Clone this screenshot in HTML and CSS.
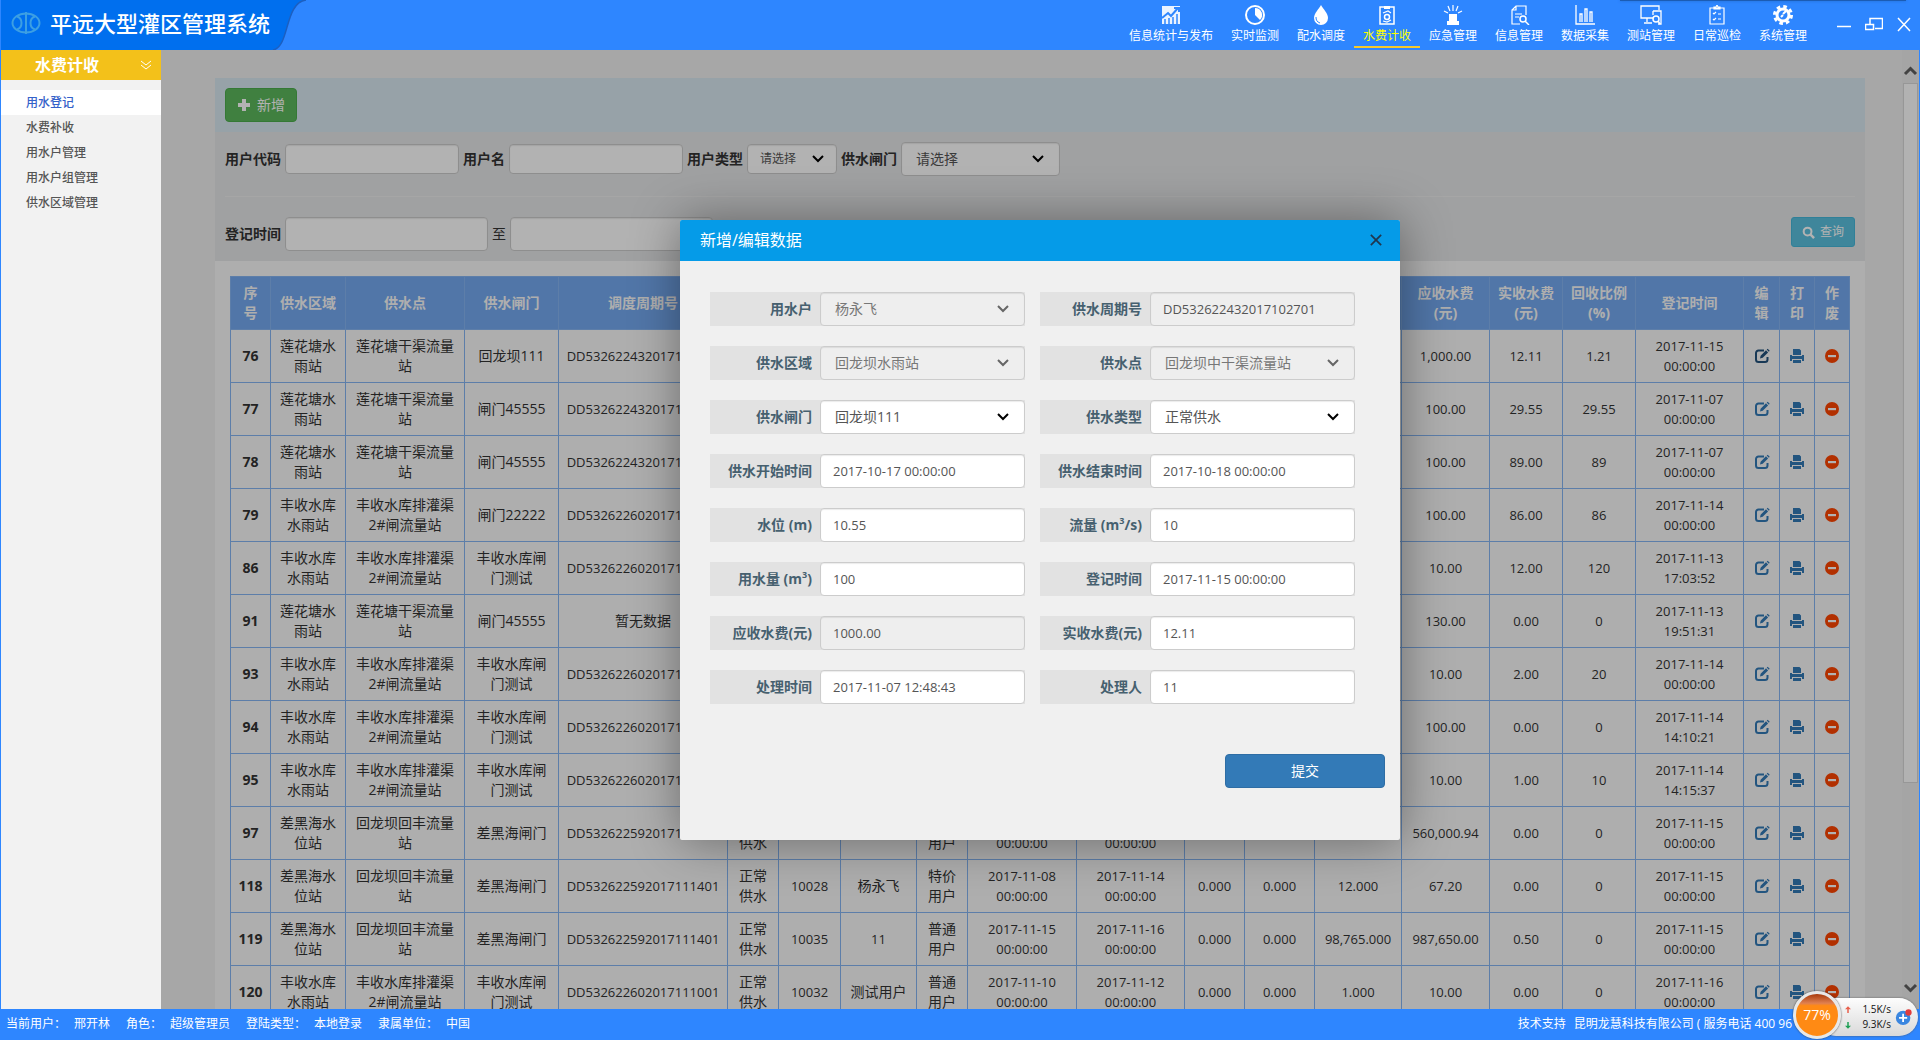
FILE: index.html
```html
<!DOCTYPE html>
<html lang="zh-CN">
<head>
<meta charset="utf-8">
<title>平远大型灌区管理系统</title>
<link rel="stylesheet" href="styles.css">
</head>
<body>
<svg class="sprite" aria-hidden="true">
  <symbol id="i-edit" viewBox="0 0 16 16"><path d="M10 2.500H4.500A2.500 2.500 0 0 0 2 5v6.500A2.500 2.500 0 0 0 4.500 14H11a2.500 2.500 0 0 0 2.500-2.500V9" fill="none" stroke="currentColor" stroke-width="2"/><path d="M6 10.500l.6-2.800L12 2.300l2.100 2.100-5.400 5.400zM12.700 1.600l1-.9 2 2-.9 1z" fill="currentColor"/></symbol>
  <symbol id="i-print" viewBox="0 0 16 16"><path d="M4 1h6.500L12 2.500V7H4zM1 7h2v1h10V7h2v6h-2v-2H3v2H1zM4 12h8v3H4z" fill="currentColor"/></symbol>
  <symbol id="i-remove" viewBox="0 0 16 16"><circle cx="8" cy="8" r="7" fill="currentColor"/><path d="M4 7h8v2.200H4z" fill="#fff"/></symbol>
</svg>

<header class="topbar">
  <div class="brand">
    <svg class="brand-bg" viewBox="0 0 305 50" preserveAspectRatio="none" aria-hidden="true"><path d="M0 0h305c-22 3-16 47-33 50H0z" fill="#006fee"/><path d="M305 0c-22 3-16 47-33 50" fill="none" stroke="#1c5fc0" stroke-width="1.500"/></svg>
    <svg class="brand-logo" viewBox="0 0 30 22" aria-hidden="true"><g fill="none" stroke="#3c9fe3" stroke-width="2"><ellipse cx="15" cy="11" rx="13.500" ry="9.500"/><path d="M15 0v22M6 4.500c6 2 6 11 0 13M24 4.500c-6 2-6 11 0 13"/></g></svg>
    <h1>平远大型灌区管理系统</h1>
  </div>
  <nav class="mainnav">
    <a class="wide" href="#"><svg viewBox="0 0 20 20"><path d="M1 1h18v18H1z" opacity=".9"/><path d="M1 13l6-5 3 3 7-8m-4 0h5v4" fill="none" stroke="#2e86ff" stroke-width="2"/><path d="M4 14v6M8 13v7M12 12v8M16 9v11" stroke="#2e86ff" stroke-width="1.500"/></svg>信息统计与发布</a>
    <a href="#"><svg viewBox="0 0 20 20"><circle cx="10" cy="10" r="9" fill="none" stroke="#fff" stroke-width="2"/><path d="M10 3a7 7 0 0 1 5 12l-5-5z"/></svg>实时监测</a>
    <a href="#"><svg viewBox="0 0 20 20"><path d="M10 0c2 4 7 8 7 13a7 7 0 0 1-14 0C3 8 8 4 10 0z"/><path d="M5 12c0 3 1 5 4 6" fill="none" stroke="#2e86ff"/></svg>配水调度</a>
    <a class="active" href="#"><svg viewBox="0 0 20 20"><path d="M3 2h14v17H3z" fill="none" stroke="#fff" stroke-width="1.500"/><path d="M7 1h6v3H7z"/><circle cx="10" cy="12" r="2.500" fill="none" stroke="#fff" stroke-width="1.500"/><path d="M6 8l5-2 3 2M14 15l-4 2-4-1" fill="none" stroke="#fff" stroke-width="1.200"/></svg>水费计收</a>
    <a href="#"><svg viewBox="0 0 20 20"><path d="M6 9h8v7h2v4H4v-4h2z"/><path d="M10 0v6M5 1l2 5M15 1l-2 5M1 6l4 2M19 6l-4 2" stroke="#fff" stroke-width="1.200"/></svg>应急管理</a>
    <a href="#"><svg viewBox="0 0 20 20"><path d="M17 10V1H7L3 5v14h8M7 1v4H3M6 9h7M6 12h4" fill="none" stroke="#fff" stroke-width="1.200"/><circle cx="14" cy="14" r="3" fill="none" stroke="#fff" stroke-width="1.500"/><path d="M16 16l4 4" stroke="#fff" stroke-width="1.500"/></svg>信息管理</a>
    <a href="#"><svg viewBox="0 0 20 20"><path d="M1 0v19h19M5 17V9h2v8M10 17V4h2v13M15 17V7h2v10" fill="none" stroke="#fff" stroke-width="1.300"/></svg>数据采集</a>
    <a href="#"><svg viewBox="0 0 22 20"><path d="M13 13H1V1h18v4M7 13v4M4 18h8M13 6h8v4M13 6v4M21 10v9h-3" fill="none" stroke="#fff" stroke-width="1.300"/><circle cx="16" cy="14" r="3" fill="none" stroke="#fff" stroke-width="1.500"/><path d="M18 16l2 3" stroke="#fff" stroke-width="1.500"/></svg>测站管理</a>
    <a href="#"><svg viewBox="0 0 20 20"><path d="M3 3h14v16H3zM7 4V2h2l1-2 1 2h2v2zM6 8l1 1 2-2M6 14l1 1 2-2M11 9h3M11 14h3" fill="none" stroke="#fff" stroke-width="1.200"/></svg>日常巡检</a>
    <a href="#"><svg viewBox="0 0 20 20"><circle cx="10" cy="10" r="6" fill="none" stroke="#fff" stroke-width="3"/><circle cx="10" cy="10" r="8.500" fill="none" stroke="#fff" stroke-width="3" stroke-dasharray="3.600 3.080"/><path d="M10 9l3-3M8 12l2-2" stroke="#fff" stroke-width="2"/></svg>系统管理</a>
  </nav>
  <div class="winctl">
    <button type="button" aria-label="最小化"><svg viewBox="0 0 18 18"><path d="M2 10.500h14"/></svg></button>
    <button type="button" aria-label="还原"><svg viewBox="0 0 18 18"><path d="M5 8V2.500h12.500v10H10M.5 8.500h8v5h-8z"/></svg></button>
    <button type="button" aria-label="关闭"><svg viewBox="0 0 18 18"><path d="M3 2l12 13M15 2L3 15"/></svg></button>
  </div>
</header>

<div class="workspace">
  <aside class="sidebar">
    <h2>水费计收<svg viewBox="0 0 10 10" aria-hidden="true"><path d="M0 1l5 4 5-4M0 5l5 4 5-4"/></svg></h2>
    <ul>
      <li class="current"><a href="#">用水登记</a></li>
      <li><a href="#">水费补收</a></li>
      <li><a href="#">用水户管理</a></li>
      <li><a href="#">用水户组管理</a></li>
      <li><a href="#">供水区域管理</a></li>
    </ul>
  </aside>

  <main class="stage">
    <div class="page">
      <section class="panel">
        <div class="toolbar">
          <button type="button" class="btn btn-add"><svg viewBox="0 0 14 14"><path d="M5 1h4v4h4v4H9v4H5V9H1V5h4z"/></svg>新增</button>
        </div>
        <form class="filters">
          <div class="filter-row">
            <label for="f-code">用户代码</label><input id="f-code" class="ctl w-m sm" type="text">
            <label for="f-name">用户名</label><input id="f-name" class="ctl w-m sm" type="text">
            <label for="f-type">用户类型</label><select id="f-type" class="ctl w-s sm"><option>请选择</option></select>
            <label for="f-gate">供水闸门</label><select id="f-gate" class="ctl w-g"><option>请选择</option></select>
          </div>
          <div class="filter-row second">
            <label for="f-from">登记时间</label><input id="f-from" class="ctl w-l" type="text">
            <label for="f-to" class="plain">至</label><input id="f-to" class="ctl w-l" type="text">
            <button type="button" class="btn btn-query"><svg viewBox="0 0 14 14"><circle cx="6" cy="6" r="4.200" fill="none" stroke="#fff" stroke-width="2.200"/><path d="M9 9l4 4" stroke="#fff" stroke-width="2.600"/></svg>查询</button>
          </div>
        </form>
        <div class="table-wrap">
          <table>
            <colgroup><col class="c40"><col class="c75"><col class="c119"><col class="c94"><col class="c169"><col class="c51"><col class="c62"><col class="c76"><col class="c51"><col class="c109"><col class="c108"><col class="c60"><col class="c70"><col class="c87"><col class="c88"><col class="c73"><col class="c73"><col class="c108"><col class="c36"><col class="c35"><col class="c35"></colgroup>
            <thead><tr><th>序<br>号</th><th>供水区域</th><th>供水点</th><th>供水闸门</th><th>调度周期号</th><th></th><th></th><th></th><th></th><th></th><th></th><th></th><th></th><th></th><th>应收水费<br>(元)</th><th>实收水费<br>(元)</th><th>回收比例<br>(%)</th><th>登记时间</th><th>编<br>辑</th><th>打<br>印</th><th>作<br>废</th></tr></thead>
            <tbody>
              <tr class="picked"><th>76</th><td class="zh">莲花塘水雨站</td><td class="zh">莲花塘干渠流量站</td><td class="zh">回龙坝111</td><td>DD532622432017102701</td><td></td><td></td><td></td><td></td><td></td><td></td><td></td><td></td><td></td><td>1,000.00</td><td>12.11</td><td>1.21</td><td>2017-11-15 00:00:00</td><td><a href="#" aria-label="编辑"><svg><use href="#i-edit"/></svg></a></td><td><a href="#" aria-label="打印"><svg><use href="#i-print"/></svg></a></td><td><a class="del" href="#" aria-label="作废"><svg><use href="#i-remove"/></svg></a></td></tr>
              <tr><th>77</th><td class="zh">莲花塘水雨站</td><td class="zh">莲花塘干渠流量站</td><td class="zh">闸门45555</td><td>DD532622432017102701</td><td></td><td></td><td></td><td></td><td></td><td></td><td></td><td></td><td></td><td>100.00</td><td>29.55</td><td>29.55</td><td>2017-11-07 00:00:00</td><td><a href="#" aria-label="编辑"><svg><use href="#i-edit"/></svg></a></td><td><a href="#" aria-label="打印"><svg><use href="#i-print"/></svg></a></td><td><a class="del" href="#" aria-label="作废"><svg><use href="#i-remove"/></svg></a></td></tr>
              <tr><th>78</th><td class="zh">莲花塘水雨站</td><td class="zh">莲花塘干渠流量站</td><td class="zh">闸门45555</td><td>DD532622432017102701</td><td></td><td></td><td></td><td></td><td></td><td></td><td></td><td></td><td></td><td>100.00</td><td>89.00</td><td>89</td><td>2017-11-07 00:00:00</td><td><a href="#" aria-label="编辑"><svg><use href="#i-edit"/></svg></a></td><td><a href="#" aria-label="打印"><svg><use href="#i-print"/></svg></a></td><td><a class="del" href="#" aria-label="作废"><svg><use href="#i-remove"/></svg></a></td></tr>
              <tr><th>79</th><td class="zh">丰收水库水雨站</td><td class="zh">丰收水库排灌渠2#闸流量站</td><td class="zh">闸门22222</td><td>DD532622602017111001</td><td></td><td></td><td></td><td></td><td></td><td></td><td></td><td></td><td></td><td>100.00</td><td>86.00</td><td>86</td><td>2017-11-14 00:00:00</td><td><a href="#" aria-label="编辑"><svg><use href="#i-edit"/></svg></a></td><td><a href="#" aria-label="打印"><svg><use href="#i-print"/></svg></a></td><td><a class="del" href="#" aria-label="作废"><svg><use href="#i-remove"/></svg></a></td></tr>
              <tr><th>86</th><td class="zh">丰收水库水雨站</td><td class="zh">丰收水库排灌渠2#闸流量站</td><td class="zh">丰收水库闸门测试</td><td>DD532622602017111001</td><td></td><td></td><td></td><td></td><td></td><td></td><td></td><td></td><td></td><td>10.00</td><td>12.00</td><td>120</td><td>2017-11-13 17:03:52</td><td><a href="#" aria-label="编辑"><svg><use href="#i-edit"/></svg></a></td><td><a href="#" aria-label="打印"><svg><use href="#i-print"/></svg></a></td><td><a class="del" href="#" aria-label="作废"><svg><use href="#i-remove"/></svg></a></td></tr>
              <tr><th>91</th><td class="zh">莲花塘水雨站</td><td class="zh">莲花塘干渠流量站</td><td class="zh">闸门45555</td><td class="zh">暂无数据</td><td></td><td></td><td></td><td></td><td></td><td></td><td></td><td></td><td></td><td>130.00</td><td>0.00</td><td>0</td><td>2017-11-13 19:51:31</td><td><a href="#" aria-label="编辑"><svg><use href="#i-edit"/></svg></a></td><td><a href="#" aria-label="打印"><svg><use href="#i-print"/></svg></a></td><td><a class="del" href="#" aria-label="作废"><svg><use href="#i-remove"/></svg></a></td></tr>
              <tr><th>93</th><td class="zh">丰收水库水雨站</td><td class="zh">丰收水库排灌渠2#闸流量站</td><td class="zh">丰收水库闸门测试</td><td>DD532622602017111001</td><td></td><td></td><td></td><td></td><td></td><td></td><td></td><td></td><td></td><td>10.00</td><td>2.00</td><td>20</td><td>2017-11-14 00:00:00</td><td><a href="#" aria-label="编辑"><svg><use href="#i-edit"/></svg></a></td><td><a href="#" aria-label="打印"><svg><use href="#i-print"/></svg></a></td><td><a class="del" href="#" aria-label="作废"><svg><use href="#i-remove"/></svg></a></td></tr>
              <tr><th>94</th><td class="zh">丰收水库水雨站</td><td class="zh">丰收水库排灌渠2#闸流量站</td><td class="zh">丰收水库闸门测试</td><td>DD532622602017111001</td><td></td><td></td><td></td><td></td><td></td><td></td><td></td><td></td><td></td><td>100.00</td><td>0.00</td><td>0</td><td>2017-11-14 14:10:21</td><td><a href="#" aria-label="编辑"><svg><use href="#i-edit"/></svg></a></td><td><a href="#" aria-label="打印"><svg><use href="#i-print"/></svg></a></td><td><a class="del" href="#" aria-label="作废"><svg><use href="#i-remove"/></svg></a></td></tr>
              <tr><th>95</th><td class="zh">丰收水库水雨站</td><td class="zh">丰收水库排灌渠2#闸流量站</td><td class="zh">丰收水库闸门测试</td><td>DD532622602017111001</td><td></td><td></td><td></td><td></td><td></td><td></td><td></td><td></td><td></td><td>10.00</td><td>1.00</td><td>10</td><td>2017-11-14 14:15:37</td><td><a href="#" aria-label="编辑"><svg><use href="#i-edit"/></svg></a></td><td><a href="#" aria-label="打印"><svg><use href="#i-print"/></svg></a></td><td><a class="del" href="#" aria-label="作废"><svg><use href="#i-remove"/></svg></a></td></tr>
              <tr><th>97</th><td class="zh">差黑海水位站</td><td class="zh">回龙坝回丰流量站</td><td class="zh">差黑海闸门</td><td>DD532622592017111401</td><td class="zh">正常供水</td><td></td><td></td><td class="zh">特价用户</td><td>2017-11-08 00:00:00</td><td>2017-11-14 00:00:00</td><td></td><td></td><td></td><td>560,000.94</td><td>0.00</td><td>0</td><td>2017-11-15 00:00:00</td><td><a href="#" aria-label="编辑"><svg><use href="#i-edit"/></svg></a></td><td><a href="#" aria-label="打印"><svg><use href="#i-print"/></svg></a></td><td><a class="del" href="#" aria-label="作废"><svg><use href="#i-remove"/></svg></a></td></tr>
              <tr><th>118</th><td class="zh">差黑海水位站</td><td class="zh">回龙坝回丰流量站</td><td class="zh">差黑海闸门</td><td>DD532622592017111401</td><td class="zh">正常供水</td><td>10028</td><td class="zh">杨永飞</td><td class="zh">特价用户</td><td>2017-11-08 00:00:00</td><td>2017-11-14 00:00:00</td><td>0.000</td><td>0.000</td><td>12.000</td><td>67.20</td><td>0.00</td><td>0</td><td>2017-11-15 00:00:00</td><td><a href="#" aria-label="编辑"><svg><use href="#i-edit"/></svg></a></td><td><a href="#" aria-label="打印"><svg><use href="#i-print"/></svg></a></td><td><a class="del" href="#" aria-label="作废"><svg><use href="#i-remove"/></svg></a></td></tr>
              <tr><th>119</th><td class="zh">差黑海水位站</td><td class="zh">回龙坝回丰流量站</td><td class="zh">差黑海闸门</td><td>DD532622592017111401</td><td class="zh">正常供水</td><td>10035</td><td>11</td><td class="zh">普通用户</td><td>2017-11-15 00:00:00</td><td>2017-11-16 00:00:00</td><td>0.000</td><td>0.000</td><td>98,765.000</td><td>987,650.00</td><td>0.50</td><td>0</td><td>2017-11-15 00:00:00</td><td><a href="#" aria-label="编辑"><svg><use href="#i-edit"/></svg></a></td><td><a href="#" aria-label="打印"><svg><use href="#i-print"/></svg></a></td><td><a class="del" href="#" aria-label="作废"><svg><use href="#i-remove"/></svg></a></td></tr>
              <tr><th>120</th><td class="zh">丰收水库水雨站</td><td class="zh">丰收水库排灌渠2#闸流量站</td><td class="zh">丰收水库闸门测试</td><td>DD532622602017111001</td><td class="zh">正常供水</td><td>10032</td><td class="zh">测试用户</td><td class="zh">普通用户</td><td>2017-11-10 00:00:00</td><td>2017-11-12 00:00:00</td><td>0.000</td><td>0.000</td><td>1.000</td><td>10.00</td><td>0.00</td><td>0</td><td>2017-11-16 00:00:00</td><td><a href="#" aria-label="编辑"><svg><use href="#i-edit"/></svg></a></td><td><a href="#" aria-label="打印"><svg><use href="#i-print"/></svg></a></td><td><a class="del" href="#" aria-label="作废"><svg><use href="#i-remove"/></svg></a></td></tr>
            </tbody>
          </table>
        </div>
      </section>
    </div>
    <div class="scrollbar" aria-hidden="true">
      <svg viewBox="0 0 17 17"><path d="M3 11l5.500-5.500L14 11"/></svg>
      <div class="thumb"></div>
      <svg viewBox="0 0 17 17"><path d="M3 6l5.500 5.500L14 6"/></svg>
    </div>

    <div class="backdrop">
      <div class="modal" role="dialog" aria-labelledby="dlg-title">
        <div class="modal-head"><h3 id="dlg-title">新增/编辑数据</h3><button type="button" aria-label="关闭"><svg viewBox="0 0 14 14"><path d="M1 1l12 12M13 1L1 13"/></svg></button></div>
        <form class="modal-form">
          <div class="fields">
            <div class="field"><label for="m1">用水户</label><select id="m1" class="ctl" disabled><option>杨永飞</option></select></div>
            <div class="field"><label for="m2">供水周期号</label><input id="m2" class="ctl" type="text" value="DD532622432017102701" readonly></div>
            <div class="field"><label for="m3">供水区域</label><select id="m3" class="ctl" disabled><option>回龙坝水雨站</option></select></div>
            <div class="field"><label for="m4">供水点</label><select id="m4" class="ctl" disabled><option>回龙坝中干渠流量站</option></select></div>
            <div class="field"><label for="m5">供水闸门</label><select id="m5" class="ctl"><option>回龙坝111</option></select></div>
            <div class="field"><label for="m6">供水类型</label><select id="m6" class="ctl"><option>正常供水</option></select></div>
            <div class="field"><label for="m7">供水开始时间</label><input id="m7" class="ctl" type="text" value="2017-10-17 00:00:00"></div>
            <div class="field"><label for="m8">供水结束时间</label><input id="m8" class="ctl" type="text" value="2017-10-18 00:00:00"></div>
            <div class="field"><label for="m9">水位 (m)</label><input id="m9" class="ctl" type="text" value="10.55"></div>
            <div class="field"><label for="m10">流量 (m<sup>3</sup>/s)</label><input id="m10" class="ctl" type="text" value="10"></div>
            <div class="field"><label for="m11">用水量 (m<sup>3</sup>)</label><input id="m11" class="ctl" type="text" value="100"></div>
            <div class="field"><label for="m12">登记时间</label><input id="m12" class="ctl" type="text" value="2017-11-15 00:00:00"></div>
            <div class="field"><label for="m13">应收水费(元)</label><input id="m13" class="ctl" type="text" value="1000.00" readonly></div>
            <div class="field"><label for="m14">实收水费(元)</label><input id="m14" class="ctl" type="text" value="12.11"></div>
            <div class="field"><label for="m15">处理时间</label><input id="m15" class="ctl" type="text" value="2017-11-07 12:48:43"></div>
            <div class="field"><label for="m16">处理人</label><input id="m16" class="ctl" type="text" value="11"></div>
          </div>
          <div class="actions"><button type="button" class="btn btn-submit">提交</button></div>
        </form>
      </div>
    </div>
  </main>
</div>

<footer class="statusbar">
  <dl>
    <div><dt>当前用户：</dt><dd>邢开林</dd></div>
    <div><dt>角色：</dt><dd>超级管理员</dd></div>
    <div><dt>登陆类型：</dt><dd>本地登录</dd></div>
    <div><dt>隶属单位：</dt><dd>中国</dd></div>
  </dl>
  <p><span>技术支持</span><span>昆明龙慧科技有限公司 ( 服务电话 400 96</span></p>
</footer>

<div class="monitor">
  <div class="ball">77%</div>
  <div class="rates">
    <span><svg viewBox="0 0 8 10"><path d="M4 0l4 4H5v5H3V4H0z" fill="#e8604c"/></svg>1.5K/s</span>
    <span><svg viewBox="0 0 8 10"><path d="M4 10l4-4H5V1H3v5H0z" fill="#1fa055"/></svg>9.3K/s</span>
  </div>
  <svg class="plus" viewBox="0 0 20 20"><circle cx="9" cy="11" r="8" fill="#3a86e0"/><path d="M4.500 11h9M9 6.500v9" stroke="#fff" stroke-width="2"/><circle cx="15" cy="5" r="3.500" fill="#e03c3c"/></svg>
</div>
</body>
</html>
```
FILE: styles.css
```css
* { box-sizing: border-box; }
body {
  margin: 0;
  height: 100vh;
  display: flex;
  flex-direction: column;
  overflow: hidden;
  border: solid #2e86ff;
  border-width: 0 1px;
  background: #f0f0f0;
  font: 14px/20px "Open Sans", "Noto Sans CJK SC", sans-serif;
  color: #333;
}
h1, h2, h3, p, ul, dl, dd { margin: 0; padding: 0; }
a { text-decoration: none; color: inherit; }
button, input, select { font: inherit; color: inherit; }
button { cursor: pointer; }
.sprite { display: none; }

/* top bar */
.topbar {
  flex: none;
  height: 50px;
  display: flex;
  background: #2e86ff;
  color: #fff;
}
.topbar::after {
  content: "";
  position: absolute;
  top: 0;
  right: 14px;
  width: 286px;
  height: 1px;
  background: #1b5cb4;
  box-shadow: 0 0 3px #1b5cb4;
}
.brand {
  position: relative;
  width: 305px;
  display: flex;
  align-items: center;
  gap: 9px;
  padding: 0 0 4px 10px;
}
.brand-bg { position: absolute; inset: 0; width: 100%; height: 100%; }
.brand-logo { position: relative; width: 30px; height: 22px; }
.brand h1 { position: relative; font-size: 22px; line-height: 30px; font-weight: 500; white-space: nowrap; }
.mainnav { margin-left: auto; display: flex; }
.mainnav a {
  width: 66px;
  height: 48px;
  padding-top: 5px;
  display: flex;
  flex-direction: column;
  align-items: center;
  gap: 3px;
  font-size: 12px;
  line-height: 16px;
  white-space: nowrap;
}
.mainnav a.wide { width: 102px; }
.mainnav svg { width: 22px; height: 20px; fill: #fff; }
.mainnav .active { color: #ff0; border-bottom: 2px solid #f5c92c; }
.winctl { display: flex; align-items: center; gap: 12px; padding: 0 6px 0 19px; }
.winctl button { padding: 0; border: 0; background: none; height: 18px; }
.winctl svg { display: block; width: 18px; height: 18px; fill: none; stroke: #fff; stroke-width: 1.500; }

.workspace { flex: 1; min-height: 0; display: flex; }

/* side menu */
.sidebar { flex: none; width: 160px; background: #f2f2f2; }
.sidebar h2 {
  display: flex;
  align-items: center;
  justify-content: space-between;
  height: 30px;
  padding: 0 10px 0 34px;
  background: #f3c11a;
  color: #fff;
  font-size: 16px;
  line-height: 30px;
}
.sidebar h2 svg { width: 10px; height: 10px; fill: none; stroke: #fff; }
.sidebar ul { list-style: none; padding-top: 10px; }
.sidebar li { height: 25px; padding-left: 25px; font-size: 12px; line-height: 25px; color: #555; font-weight: 500; }
.sidebar .current { background: #fff; color: #3461c9; }

/* page */
.stage { position: relative; flex: 1; min-width: 0; display: flex; overflow: hidden; }
.page { flex: 1; min-width: 0; padding: 28px 37px 0 54px; }
.panel { background: #fafafa; }
.toolbar { height: 54px; padding: 10px; background: #d9e9f1; }
.btn {
  display: inline-flex;
  align-items: center;
  justify-content: center;
  gap: 6px;
  border: 1px solid;
  border-radius: 4px;
  padding: 0 11px;
  height: 34px;
  color: #fff;
}
.btn svg { width: 14px; height: 14px; fill: #fff; }
.btn-add { background: #5cb85c; border-color: #4cae4c; }
.btn-query { align-self: flex-start; margin-left: auto; height: 30px; padding: 0 10px; gap: 5px; font-size: 12px; border-radius: 3px; background: #5bc0de; border-color: #46b8da; }
.btn-query svg { width: 13px; height: 13px; }
.btn-submit { width: 160px; background: #337ab7; border-color: #2e6da4; }
.filters { height: 129px; padding: 10px; background: #e6e7e9; }
.filter-row { display: flex; align-items: center; gap: 4px; height: 34px; }
.filter-row.second { margin-top: 20px; padding-top: 20px; height: 54px; border-top: 1px solid #eee; }
.filter-row label { font-weight: 700; line-height: 20px; }
.filter-row label.plain { font-weight: 400; }
.ctl {
  height: 34px;
  padding: 0 12px;
  border: 1px solid #ccc;
  border-radius: 4px;
  background-color: #fff;
  box-shadow: inset 0 1px 1px rgba(0, 0, 0, .08);
  font-size: 13px;
  color: #555;
}
select.ctl {
  appearance: none;
  padding: 0 14px;
  font-size: 14px;
  opacity: 1;
  background-image: url("data:image/svg+xml,%3Csvg xmlns='http://www.w3.org/2000/svg' viewBox='0 0 12 8'%3E%3Cpath d='M1 1l5 5 5-5' fill='none' stroke='black' stroke-width='2'/%3E%3C/svg%3E");
  background-repeat: no-repeat;
  background-size: 12px 8px;
  background-position: right 15px center;
}
.ctl:disabled, .ctl:read-only:not(select) { background-color: #eee; }
select.ctl:disabled {
  color: #777;
  background-image: url("data:image/svg+xml,%3Csvg xmlns='http://www.w3.org/2000/svg' viewBox='0 0 12 8'%3E%3Cpath d='M1 1l5 5 5-5' fill='none' stroke='%23666' stroke-width='2'/%3E%3C/svg%3E");
}
.ctl.sm { height: 30px; }
select.ctl.sm { font-size: 12px; padding: 0 12px; background-position: right 12px center; }
.w-m { width: 174px; }
.w-s { width: 90px; }
.w-g { width: 159px; }
.w-l { width: 203px; }

/* data table */
.table-wrap { padding: 15px; }
table { width: 100%; table-layout: fixed; border-collapse: collapse; background: #fafafa; }
th, td { height: 53px; padding: 6px; border: 1px solid #86b5f3; text-align: center; vertical-align: middle; }
td { font-size: 13px; white-space: normal; }
td.zh { font-size: 14px; }
thead th { background: #74a9f1; color: #fafafa; border-color: #86b5f3; }
td svg { display: block; width: 16px; height: 16px; margin: 0 auto; }
td a { color: #337ab7; }
td a.del { color: #ff4500; }
.picked td:nth-child(19) a { color: #23527c; }
.c35 { width: 35px; } .c36 { width: 36px; } .c40 { width: 40px; } .c51 { width: 51px; }
.c60 { width: 60px; } .c62 { width: 62px; } .c70 { width: 70px; } .c73 { width: 73px; }
.c75 { width: 75px; } .c76 { width: 76px; } .c87 { width: 87px; } .c88 { width: 88px; }
.c94 { width: 94px; } .c108 { width: 108px; } .c109 { width: 109px; } .c119 { width: 119px; } .c169 { width: 169px; }

.scrollbar { flex: none; width: 17px; display: flex; flex-direction: column; padding: 13px 0; background: #ececec; }
.scrollbar svg { flex: none; width: 17px; height: 17px; fill: none; stroke: #606060; stroke-width: 3; }
.scrollbar .thumb { height: 75%; margin: 3px 1px auto; background: #fff; border: 1px solid #d8d8d8; }

/* dialog */
.backdrop {
  position: absolute;
  inset: 0;
  display: flex;
  align-items: center;
  justify-content: center;
  background: rgba(0, 0, 0, .3);
}
.modal { width: 720px; border-radius: 2px; background: #f0f0f0; box-shadow: 1px 1px 50px rgba(0, 0, 0, .4); }
.modal-head {
  display: flex;
  align-items: center;
  justify-content: space-between;
  height: 41px;
  padding: 0 18px 0 20px;
  border-radius: 2px 2px 0 0;
  background: #059be8;
  color: #fff;
}
.modal-head h3 { font-size: 16px; font-weight: 400; line-height: 41px; }
.modal-head button { padding: 0; border: 0; background: none; }
.modal-head svg { display: block; width: 12px; height: 12px; fill: none; stroke: #20364e; stroke-width: 2; }
.modal-form { padding: 31px 15px 52px 30px; }
.fields { display: grid; grid-template-columns: 1fr 1fr; gap: 20px 15px; padding-right: 30px; }
.field { display: flex; background: #e2e2e2; }
.field label { width: 110px; padding-right: 8px; text-align: right; font-weight: 700; line-height: 34px; height: 34px; color: #46606f; white-space: nowrap; }
.field sup { font-size: 9px; line-height: 0; vertical-align: super; }
.field .ctl { flex: 1; min-width: 0; }
.actions { display: flex; justify-content: flex-end; margin-top: 50px; }

/* status bar */
.statusbar {
  flex: none;
  height: 31px;
  display: flex;
  justify-content: space-between;
  padding: 0 127px 0 5px;
  background: #2e86ff;
  color: #fff;
  font-size: 12px;
  line-height: 30px;
}
.statusbar dl, .statusbar dl div { display: flex; }
.statusbar dl { gap: 16px; }
.statusbar dl div { gap: 8px; }
.statusbar p { display: flex; gap: 8px; }

/* floating network meter */
.monitor {
  position: absolute;
  right: 2px;
  bottom: 4px;
  width: 101px;
  height: 38px;
  display: flex;
  align-items: center;
  padding: 0 5px 0 0;
  border-radius: 19px;
  background: linear-gradient(#fdfdfd, #d9d9d9);
  box-shadow: 0 0 2px #555;
}
.ball {
  flex: none;
  width: 48px;
  height: 48px;
  margin: 0 0 4px -24px;
  border: 3px solid #e8e8e8;
  border-radius: 50%;
  background: linear-gradient(#a83a0c, #e08050 22%, #ff8a14 28%, #ff8a14);
  box-shadow: 0 0 2px #333;
  color: #fff;
  font-size: 14px;
  line-height: 42px;
  text-align: center;
}
.rates { flex: 1; padding: 0 4px; color: #111; font-size: 10px; line-height: 15px; }
.rates span { display: flex; align-items: center; justify-content: space-between; }
.rates svg { width: 6px; height: 8px; }
.plus { flex: none; width: 18px; height: 20px; }
```
